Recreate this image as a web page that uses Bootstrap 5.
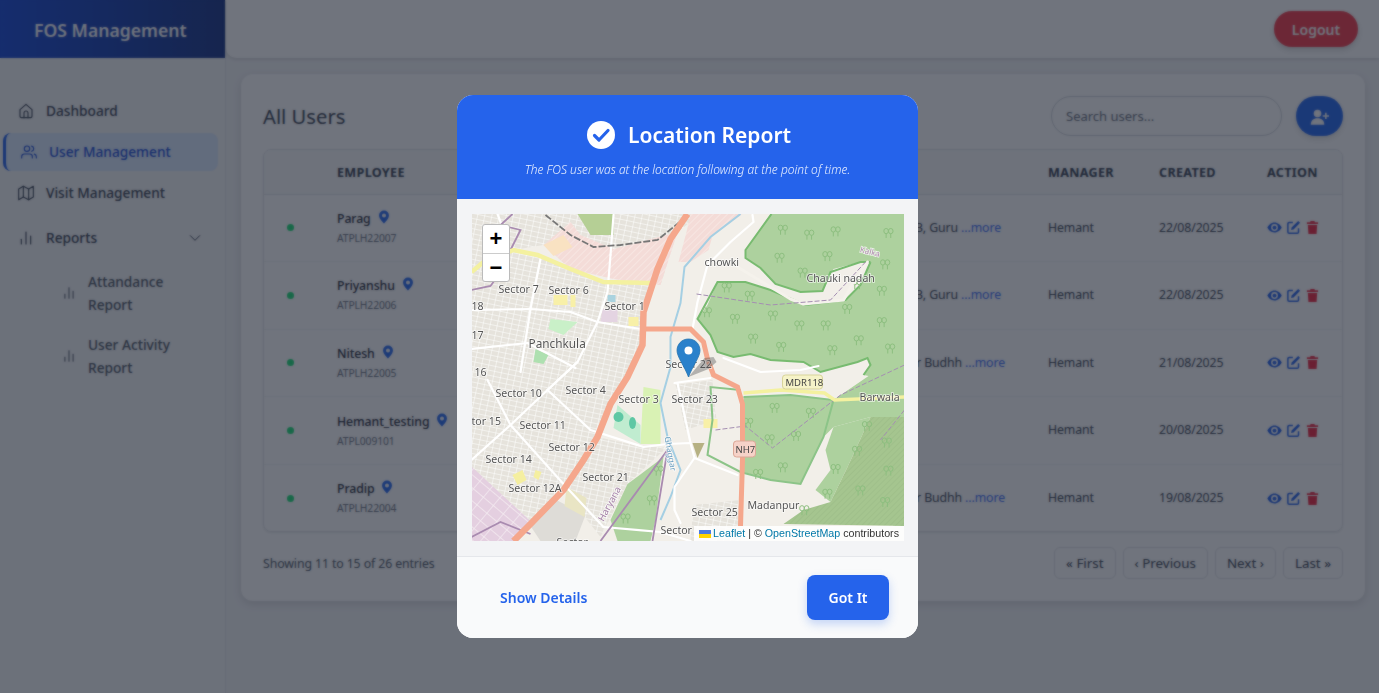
<!DOCTYPE html>
<html lang="en">
<head>
    <meta charset="UTF-8">
    <title>FOS Management</title>
    <link href="https://cdn.jsdelivr.net/npm/bootstrap@5.3.3/dist/css/bootstrap.min.css" rel="stylesheet">
    <style>
        body {
            font-family: "Noto Sans", "Open Sans", sans-serif;
            background-color: #f3f4f6;
            color: #1f2937;
            height: 693px;
            overflow: hidden;
        }

        .side-panel { width: 226px; height: 693px; background-color: #f6f7f8; border-right: 1px solid #e5e7eb; flex-shrink: 0; }
        .brand-box { height: 58px; background: linear-gradient(90deg, #1d4ed8, #1e3a8a); color: #fff; font-size: 17.6px; font-weight: 600; padding: 2px 0 0 34px; }
        .side-menu { padding-top: 34px; }
        .side-link { display: flex; align-items: center; color: #374151; text-decoration: none; font-size: 13.7px; font-weight: 500; height: 38px; padding-left: 18px; margin-right: 7px; margin-bottom: 3px; gap: 12px; }
        .side-link svg { width: 16px; height: 16px; fill: none; stroke: currentColor; stroke-width: 1.7; stroke-linecap: round; stroke-linejoin: round; flex-shrink: 0; }
        .side-link.is-active { color: #1d4ed8; background-color: #dbeafe; border-left: 3px solid #2563eb; border-radius: 8px; margin-left: 3px; padding-left: 15px; }
        .side-link.reports { margin-top: 7px; padding-right: 16px; }
        .side-link.reports .drop { margin-left: auto; width: 14px; height: 14px; }
        .sub-link { display: flex; align-items: center; color: #4b5563; font-size: 13.7px; font-weight: 500; line-height: 23px; padding-left: 62px; gap: 12px; height: 46px; margin-bottom: 17px; }
        .sub-link svg { width: 14px; height: 14px; fill: none; stroke: currentColor; stroke-width: 1.7; stroke-linecap: round; flex-shrink: 0; }
        .sub-link:first-of-type { margin-top: 13px; }

        .main-side { flex-grow: 1; min-width: 0; }
        .top-strip { height: 58px; background-color: #fff; border-bottom-left-radius: 10px; box-shadow: 0 1px 4px rgba(0, 0, 0, .15); padding-right: 21px; }
        .logout-btn { width: 84px; height: 36px; background-color: #f43f4e; color: #fff; border: 0; border-radius: 18px; font-size: 14px; font-weight: 600; box-shadow: 0 3px 6px rgba(0, 0, 0, .15); }
        .users-card { width: 1124px; height: 527px; margin: 16px 0 0 15px; background-color: #fff; border-radius: 12px; box-shadow: 0 3px 10px rgba(0, 0, 0, .12); padding: 22px; }
        .page-title { font-size: 20.2px; font-weight: 400; color: #374151; margin: 0; }
        .tool-row { gap: 14px; }
        .search-box { width: 231px; height: 40px; border-radius: 20px; border: 1px solid #d1d5db; font-size: 13px; padding-left: 14px; background: transparent; }
        .search-box::placeholder { color: #6b7280; }
        .add-btn { width: 47px; height: 40px; border-radius: 20px; background-color: #2a6bf0; border: 0; box-shadow: 0 3px 6px rgba(0, 0, 0, .12); }
        .add-btn svg { width: 19px; height: 19px; fill: #fff; }

        .table-box { width: 1080px; height: 383px; margin-top: 13px; border: 1px solid #e5e7eb; border-radius: 8px; overflow: hidden; box-shadow: 0 1px 2px rgba(0, 0, 0, .08); }
        .user-table { table-layout: fixed; margin: 0; font-size: 12.3px; letter-spacing: -.1px; }
        .user-table th { height: 44px; background-color: #f9fafb; font-size: 12.6px; font-weight: 700; letter-spacing: .3px; color: #374151; vertical-align: middle; padding: 3px 16px 0; border-color: #e5e7eb; }
        .user-table td { height: 67.6px; vertical-align: middle; padding: 0 16px; color: #374151; border-color: #f3f4f6; }
        .user-table tr:last-child td { border-bottom: 0; }
        .state-dot { display: block; width: 7px; height: 7px; margin-left: 7px; border-radius: 50%; background-color: #22e07a; }
        .emp-name { font-weight: 500; color: #1f2937; line-height: 18px; white-space: nowrap; padding-top: 1px; }
        .emp-name svg { width: 14px; height: 14px; fill: #2a6bf0; margin-left: 6px; vertical-align: -1px; }
        .emp-code { font-size: 10.3px; color: #6b7280; line-height: 18px; margin-top: 1px; }
        .addr-cell { text-align: right; padding-right: 31px !important; }
        .addr-cell.longer { padding-right: 27px !important; }
        .more-link { color: #3b6cf6; text-decoration: none; }
        .act-icons { display: flex; gap: 4px; align-items: center; }
        .act-icons svg { width: 15px; height: 15px; }
        .ico-blue { fill: #2563eb; }
        .ico-red { fill: #ef2c44; }

        .foot-line { margin-top: 15px; font-size: 12.3px; letter-spacing: -.1px; color: #4b5563; }
        .foot-count { padding-top: 2px; }
        .pg-row { gap: 7px; }
        .pg-btn { height: 32px; padding: 0 11px; font-size: 13.4px; letter-spacing: 0; color: #374151; background: transparent; border: 1px solid #e5e7eb; border-radius: 6px; line-height: 31px; }

        .modal-backdrop.show { background-color: #111827; opacity: .6; backdrop-filter: blur(1px); }
        .modal-backdrop { background-color: #111827; }
        .report-dialog { width: 461px; max-width: 461px; margin: 95px 0 0 457px; }
        .report-content { border: 0; border-radius: 16px; overflow: hidden; height: 543px; }
        .report-head { height: 104px; background-color: #2563eb; color: #fff; padding-top: 25px; }
        .report-title { font-size: 21px; font-weight: 600; margin: 0; gap: 13px; line-height: 30px; padding-left: 3px; }
        .report-title svg { width: 28px; height: 28px; }
        .report-sub { font-size: 12px; font-style: italic; font-weight: 300; margin: 11px 0 0; line-height: 17px; color: #e8efff; }
        .report-body { height: 357px; background-color: #f3f4f6; padding: 15px 14.5px; }
        .map-box { position: relative; width: 432.5px; height: 327px; overflow: hidden; background-color: #f2efe9; }
        .map-box svg.map-art { display: block; width: 432.5px; height: 327px; filter: blur(.5px); }
        .map-art text { font-family: "Noto Sans", sans-serif; font-size: 10.6px; fill: #555; stroke: #fff; stroke-opacity: .7; stroke-width: 1.6px; paint-order: stroke; }
        .map-zoom { position: absolute; left: 10.5px; top: 10px; width: 28px; border: 1px solid #bbb; border-radius: 3px; background-color: #fff; }
        .map-zoom span { display: block; height: 28px; line-height: 27px; text-align: center; font-size: 22px; font-weight: 700; font-family: "Liberation Sans", sans-serif; color: #000; }
        .map-zoom span + span { border-top: 1px solid #ccc; }
        .map-credit { position: absolute; right: 0; bottom: 0; height: 15px; line-height: 15px; padding: 0 5px; font-family: "Liberation Sans", Arial, sans-serif; font-size: 10.7px; color: #333; background-color: rgba(255, 255, 255, .85); white-space: nowrap; }
        .map-credit a { color: #0078a8; text-decoration: none; }
        .map-credit svg { width: 12px; height: 8px; vertical-align: -.5px; margin-right: 2px; }
        .report-foot { height: 82px; background-color: #f9fafb; border-top: 1px solid #e5e7eb; padding: 0 29px 0 43px; }
        .detail-link { color: #2563eb; font-size: 14px; font-weight: 600; text-decoration: none; }
        .got-btn { width: 82px; height: 45px; background-color: #2563eb; color: #fff; border: 0; border-radius: 8px; font-size: 14px; font-weight: 600; box-shadow: 0 4px 10px rgba(37, 99, 235, .25); }
    </style>
</head>
<body>

<div class="d-flex">
    <aside class="side-panel">
        <div class="brand-box d-flex align-items-center">FOS Management</div>
        <nav class="side-menu">
            <a class="side-link" href="#">
                <svg viewBox="0 0 24 24"><path d="M3 10l9-8 9 8v10a2 2 0 0 1-2 2H5a2 2 0 0 1-2-2z"/><path d="M9 22v-7a3 3 0 0 1 6 0v7"/></svg>
                Dashboard
            </a>
            <a class="side-link is-active" href="#">
                <svg viewBox="0 0 24 24"><path d="M17 21v-2a4 4 0 0 0-4-4H5a4 4 0 0 0-4 4v2"/><circle cx="9" cy="7" r="4"/><path d="M23 21v-2a4 4 0 0 0-3-3.87"/><path d="M16 3.13a4 4 0 0 1 0 7.75"/></svg>
                User Management
            </a>
            <a class="side-link" href="#">
                <svg viewBox="0 0 24 24"><path d="M1 6v16l7-4 8 4 7-4V2l-7 4-8-4z"/><path d="M8 2v16"/><path d="M16 6v16"/></svg>
                Visit Management
            </a>
            <a class="side-link reports" href="#">
                <svg viewBox="0 0 24 24"><path d="M5 21v-7"/><path d="M12 21V3"/><path d="M19 21V9"/></svg>
                Reports
                <svg class="drop" viewBox="0 0 24 24"><path d="M4 8l8 8 8-8"/></svg>
            </a>
            <div class="sub-link">
                <svg viewBox="0 0 24 24"><path d="M5 21v-7"/><path d="M12 21V3"/><path d="M19 21V9"/></svg>
                <span>Attandance<br>Report</span>
            </div>
            <div class="sub-link">
                <svg viewBox="0 0 24 24"><path d="M5 21v-7"/><path d="M12 21V3"/><path d="M19 21V9"/></svg>
                <span>User Activity<br>Report</span>
            </div>
        </nav>
    </aside>

    <div class="main-side">
        <header class="top-strip d-flex align-items-center justify-content-end">
            <button class="logout-btn" type="button">Logout</button>
        </header>

        <main class="users-card">
            <div class="d-flex align-items-center justify-content-between">
                <h1 class="page-title">All Users</h1>
                <div class="d-flex tool-row">
                    <input class="search-box" type="text" placeholder="Search users...">
                    <button class="add-btn" type="button" aria-label="Add user">
                        <svg viewBox="0 0 24 24"><circle cx="9.5" cy="7" r="4.8"/><path d="M1 21c0-5 3-8 8.500-8s8.500 3 8.500 8z"/><path d="M19 6v3h-3v2h3v3h2v-3h3V9h-3V6z"/></svg>
                    </button>
                </div>
            </div>

            <div class="table-box">
                <table class="table user-table">
                    <colgroup>
                        <col style="width: 57px">
                        <col style="width: 149px">
                        <col style="width: 562px">
                        <col style="width: 111px">
                        <col style="width: 108px">
                        <col style="width: 93px">
                    </colgroup>
                    <thead>
                        <tr><th></th><th>EMPLOYEE</th><th></th><th>MANAGER</th><th>CREATED</th><th>ACTION</th></tr>
                    </thead>
                    <tbody id="userRows"></tbody>
                </table>
            </div>

            <div class="foot-line d-flex align-items-center justify-content-between">
                <span class="foot-count">Showing 11 to 15 of 26 entries</span>
                <div class="d-flex pg-row">
                    <span class="pg-btn">« First</span>
                    <span class="pg-btn">‹ Previous</span>
                    <span class="pg-btn">Next ›</span>
                    <span class="pg-btn">Last »</span>
                </div>
            </div>
        </main>
    </div>
</div>

<div class="modal-backdrop show"></div>

<div class="modal d-block" tabindex="-1">
    <div class="modal-dialog report-dialog">
        <div class="modal-content report-content">
            <div class="report-head text-center">
                <h2 class="report-title d-flex align-items-center justify-content-center">
                    <svg viewBox="0 0 28 28"><circle cx="14" cy="14" r="14" fill="#fff"/><path d="M7.500 14.500l4.500 4.500 9-9.500" fill="none" stroke="#2563eb" stroke-width="3.200" stroke-linecap="round" stroke-linejoin="round"/></svg>
                    Location Report
                </h2>
                <p class="report-sub">The FOS user was at the location following at the point of time.</p>
            </div>

            <div class="report-body">
                <div class="map-box">
                    <svg class="map-art" viewBox="471.5 214 432.5 327" xmlns="http://www.w3.org/2000/svg">
                        <defs>
                            <pattern id="blocks" width="7" height="5" patternUnits="userSpaceOnUse" patternTransform="rotate(12)">
                                <rect width="7" height="5" fill="#e6e3dc"/>
                                <path d="M0 0H7M0 0V5" stroke="#fff" stroke-width="1"/>
                            </pattern>
                            <pattern id="lilac" width="13" height="10" patternUnits="userSpaceOnUse" patternTransform="rotate(40)">
                                <rect width="13" height="10" fill="#e4cfe0"/>
                                <path d="M0 0H13M0 0V10" stroke="#f4ecf1" stroke-width="1.400"/>
                            </pattern>
                            <pattern id="pinkHatch" width="5" height="5" patternUnits="userSpaceOnUse" patternTransform="rotate(-45)">
                                <rect width="5" height="5" fill="#f4dcd8"/>
                                <path d="M0 0H5" stroke="#f9eae6" stroke-width="1.500"/>
                            </pattern>
                            <pattern id="greenHatch" width="4" height="4" patternUnits="userSpaceOnUse" patternTransform="rotate(-45)">
                                <rect width="4" height="4" fill="#a5c58f"/>
                                <path d="M0 0H4" stroke="#9aba86" stroke-width="1"/>
                            </pattern>
                            <symbol id="tree" viewBox="0 0 36 36" width="36" height="36">
                                <g fill="none" stroke="#8dbe80" stroke-width="3">
                                    <ellipse cx="11" cy="11" rx="7" ry="8"/><ellipse cx="25" cy="11" rx="7" ry="8"/>
                                    <path d="M11 19v13M25 19v13"/>
                                </g>
                            </symbol>
                        </defs>

                        <rect x="471.500" y="214" width="432.500" height="327" fill="#f2efe9"/>

                        <!-- land use -->
                        <path d="M471.500 214H690V222L677 232 660 285 613 279 570 269 543 245 513 250 471.500 272z" fill="url(#blocks)"/>
                        <path d="M543 245L570 222 580 235 613 249 677 232 660 285 613 279 570 269z" fill="url(#pinkHatch)"/>
                        <path d="M690 214H742L712 236 708 250 690 262 678 262 686 232z" fill="url(#pinkHatch)"/>
                        <path d="M543 245L563 235 572 247 553 256z" fill="#f9e2c2"/>
                        <path d="M577 214H613V235H590z" fill="#b5cf95"/>

                        <!-- built up blocks -->
                        <path d="M471.500 272L513 250 540 255 570 269 603 282 650 283 643 312 640 345 627 377 597 437 563 490 530 524 471.500 470z" fill="url(#blocks)"/>
                        <path d="M597 437L643 447 667 447 627 484 600 537 563 490z" fill="url(#blocks)"/>
                        <path d="M471.500 467L533 524 518 541H471.500z" fill="url(#lilac)"/>
                        <path d="M552 498L585 515 575 541 540 541 530 526z" fill="#dedcd7"/>
                        <path d="M566 487L586 498 584 517 564 506z" fill="#e9e5c4"/>
                        <path d="M675 385L712 380 716 420 685 430z" fill="url(#blocks)"/>
                        <path d="M693 505L740 500 740 541 690 541z" fill="url(#blocks)"/>
                        <path d="M602 309L617 309 617 322 600 322z" fill="#e4d4e2"/>
                        <rect x="607" y="295" width="8" height="7" fill="#aad3df"/>
                        <rect x="553" y="295" width="14" height="10" fill="#f8f0a8"/>
                        <rect x="570" y="295" width="5" height="12" fill="#f8f0a8"/>
                        <rect x="628" y="317" width="10" height="9" fill="#f8f0a8"/>
                        <rect x="703" y="419" width="14" height="9" fill="#f8f0a8"/>
                        <path d="M550 319L577 322 563 335 548 329z" fill="#c9f0c8"/>
                        <path d="M535 349L548 355 543 364 533 362z" fill="#aee0b0"/>
                        <path d="M643 387L660 390 660 444 640 444z" fill="#d9f2b4"/>
                        <path d="M617 405L640 425 640 444 613 428z" fill="#c0ecd0"/>
                        <ellipse cx="618" cy="417" rx="5" ry="5" fill="#5fc7a4"/>
                        <ellipse cx="632" cy="423" rx="3.500" ry="6" fill="#5fc7a4"/>
                        <path d="M692 443H704L697 458z" fill="#b6b183"/>
                        <path d="M512 475L522 470 526 480 517 485zM535 470L541 472 538 480 533 477z" fill="#f5efa0"/>

                        <!-- forest -->
                        <path d="M770 214H904V417L870 417 833 427 823 437 800 484 770 480 743 472V397L790 395 833 400 868 376 863 375 870 365 867 358 857 362 820 372 803 362 770 360 750 354 733 357 717 352 710 335 697 319 707 305 717 282 745 282 770 290 805 305 845 300 860 285 870 262 860 262 833 269 822 291 800 292 775 284 760 268 745 258 745 250z" fill="#add19e"/>
                        <path d="M771 214L745 250V258L760 268 775 284 800 292 822 291 830 272 860 262 870 262M870 262L860 285 845 300 805 305 770 290 745 282H717L697 319 710 335 717 352 733 357 750 354 770 360 803 362 820 372 857 362 867 358 870 365 863 375" fill="none" stroke="#78bb70" stroke-width="2"/>
                        <path d="M743 397L790 395 833 400 823 437 800 484 770 480 740 472 707 455 712 420 710 387 740 390" fill="none" stroke="#8cc488" stroke-width="2"/>
                        <path d="M833 427L870 417 847 467 830 502 815 490 830 470 825 450z" fill="#add19e"/>
                        <path d="M783 524L803 510 830 502 847 467 870 417H904V526z" fill="url(#greenHatch)"/>
                        <path d="M663 457L627 484 610 520 617 541H650L655 520z" fill="#add19e"/>
                        <path d="M833 400L870 376 904 372V392L868 391z" fill="#add19e"/>
                        <path d="M745 373L704 355 722 357 760 362 803 366 818 376 782 385 745 392z" fill="#f2efe9"/>

                        <!-- trees, in 3x crop coordinates -->
                        <g transform="translate(684 206) scale(.33)">
                            <use href="#tree" x="280" y="55"/><use href="#tree" x="360" y="70"/><use href="#tree" x="440" y="60"/><use href="#tree" x="600" y="65"/>
                            <use href="#tree" x="270" y="140"/><use href="#tree" x="415" y="135"/><use href="#tree" x="340" y="185"/><use href="#tree" x="590" y="160"/>
                            <use href="#tree" x="110" y="230"/><use href="#tree" x="180" y="255"/><use href="#tree" x="580" y="240"/><use href="#tree" x="505" y="220"/>
                            <use href="#tree" x="475" y="295"/><use href="#tree" x="50" y="305"/><use href="#tree" x="135" y="325"/><use href="#tree" x="250" y="315"/>
                            <use href="#tree" x="330" y="345"/><use href="#tree" x="410" y="345"/><use href="#tree" x="580" y="335"/><use href="#tree" x="190" y="385"/>
                            <use href="#tree" x="275" y="410"/><use href="#tree" x="430" y="420"/><use href="#tree" x="510" y="390"/><use href="#tree" x="605" y="415"/>
                        </g>
                        <g transform="translate(684 371) scale(.33)">
                            <use href="#tree" x="255" y="95"/><use href="#tree" x="365" y="110"/><use href="#tree" x="175" y="140"/><use href="#tree" x="240" y="190"/>
                            <use href="#tree" x="320" y="180"/><use href="#tree" x="280" y="275"/><use href="#tree" x="205" y="295"/><use href="#tree" x="440" y="280"/>
                            <use href="#tree" x="415" y="355"/><use href="#tree" x="345" y="405"/><use href="#tree" x="535" y="150"/><use href="#tree" x="595" y="200"/>
                            <use href="#tree" x="505" y="225"/><use href="#tree" x="600" y="285"/><use href="#tree" x="515" y="345"/><use href="#tree" x="590" y="380"/>
                        </g>
                        <g transform="translate(464 371) scale(.33)">
                            <use href="#tree" x="470" y="430"/><use href="#tree" x="550" y="375"/><use href="#tree" x="570" y="285"/>
                        </g>

                        <!-- water -->
                        <path d="M740 214L710 237 684 267 680 303 670 337V367L660 403 667 437 680 470 670 497 660 520" fill="none" stroke="#a5cfe3" stroke-width="2"/>

                        <!-- streets -->
                        <g fill="none" stroke="#fff" stroke-width="2.200" stroke-linecap="round" stroke-linejoin="round">
                            <path d="M540 259L530 309 520 372"/>
                            <path d="M471 310L530 309 570 312 597 322 640 329"/>
                            <path d="M610 255L607 292 597 322 577 362 547 390"/>
                            <path d="M471 349L527 343 575 368"/>
                            <path d="M547 390L590 430 643 447 667 444 690 443 694 458 737 475"/>
                            <path d="M487 380L510 425 563 484 603 527"/>
                            <path d="M471 460L510 425 547 390 577 362"/>
                            <path d="M694 458L674 487V510L680 523"/>
                            <path d="M674 383L710 378M677 383L690 443"/>
                            <path d="M752 215L753 222 730 242 707 265 697 302 692 329"/>
                            <path d="M613 215L610 255M603 527L660 532 690 541M497 214L505 235 498 250"/>
                            <path d="M723 358L760 372 800 370 818 366"/>
                            <path d="M737 267L790 299 803 304 843 300 853 282 867 262" stroke="#f5f2ec" stroke-width="3"/>
                        </g>

                        <!-- boundaries and rails -->
                        <g fill="none" stroke="#a98bb0" stroke-width="1.800">
                            <path d="M667 450L600 541M667 450L652 541"/>
                            <path d="M471 537L500 522 530 534"/>
                            <path d="M471 290L490 286 498 275M510 250L520 230 500 225 512 214"/>
                        </g>
                        <g fill="none" stroke="#a58fb2" stroke-width="1" stroke-dasharray="5 2">
                            <path d="M696 294L770 305 830 300 865 262M715 430L745 426 772 448 840 395 904 365M904 410L880 440"/>
                        </g>
                        <path d="M545 215L570 235 593 247 620 245 657 240 683 219" fill="none" stroke="#777" stroke-width="1.800" stroke-dasharray="7 2"/>

                        <!-- main roads -->
                        <path d="M471 272L483 262 513 250 537 255 570 269 603 282 650 283" fill="none" stroke="#f4f1a0" stroke-width="4.500"/>
                        <path d="M743 393L780 390 824 393 834 400 904 397" fill="none" stroke="#f4f1a0" stroke-width="3.400"/>
                        <path d="M642 329H690L703 342 707 359 713 375 737 387 742 404V460L740 526" fill="none" stroke="#f5a78c" stroke-width="5"/>
                        <path d="M687 214L670 239 657 269 643 312 642 345 627 377 610 404 597 437 583 460 563 490 530 524 513 541" fill="none" stroke="#f5a78c" stroke-width="6.500"/>

                        <!-- labels -->
                        <text x="498" y="293">Sector 7</text>
                        <text x="548" y="294">Sector 6</text>
                        <text x="604" y="310">Sector 1</text>
                        <text x="471" y="310">18</text>
                        <text x="471" y="339">17</text>
                        <text x="474" y="376">16</text>
                        <text x="528" y="348" style="font-size: 11.800px">Panchkula</text>
                        <text x="704" y="266">chowki</text>
                        <text x="806" y="282">Chauki nadah</text>
                        <text x="665" y="368">Sector 22</text>
                        <text x="495" y="397">Sector 10</text>
                        <text x="565" y="394">Sector 4</text>
                        <text x="618" y="403">Sector 3</text>
                        <text x="671" y="403">Sector 23</text>
                        <text x="471" y="425">tor 15</text>
                        <text x="519" y="429">Sector 11</text>
                        <text x="548" y="451">Sector 12</text>
                        <text x="485" y="463">Sector 14</text>
                        <text x="582" y="481">Sector 21</text>
                        <text x="508" y="492">Sector 12A</text>
                        <text x="691" y="516">Sector 25</text>
                        <text x="660" y="534">Sector</text>
                        <text x="556" y="546">Sector</text>
                        <text x="747" y="509">Madanpur</text>
                        <text x="859" y="401">Barwala</text>
                        <text transform="translate(859 252) rotate(14)" style="font-size: 8px; fill: #b08ab0">Kalka</text>
                        <text transform="translate(664 437) rotate(80)" style="font-size: 8.500px; fill: #6a9fc0">Ghaggar</text>
                        <text transform="translate(603 522) rotate(-62)" style="font-size: 9.500px; fill: #a583a8">Haryana</text>

                        <rect x="782" y="375" width="40" height="14" rx="3" fill="#f6f3c8" stroke="#d8d49a"/>
                        <text x="785" y="385.500" style="font-size: 9.500px; fill: #444; stroke: none">MDR118</text>
                        <rect x="733" y="441" width="22" height="16" rx="3" fill="#f6d2c8" stroke="#dca897"/>
                        <text x="735" y="452.500" style="font-size: 9.500px; fill: #444; stroke: none">NH7</text>

                        <!-- marker -->
                        <path d="M688 377L704 358 713 357 716 362 708 369z" fill="#555" opacity=".4"/>
                        <path d="M688 339C681 339 676.500 344.500 676.500 350.500C676.500 357 684 366 688 377C692 366 699.500 357 699.500 350.500C699.500 344.500 695 339 688 339z" fill="#2a81cb" stroke="#2474b0" stroke-width=".8"/>
                        <circle cx="688" cy="350.500" r="4" fill="#fff"/>
                    </svg>

                    <div class="map-zoom"><span>+</span><span>−</span></div>
                    <div class="map-credit">
                        <svg viewBox="0 0 12 8"><rect width="12" height="4" fill="#4C7BE1"/><rect y="4" width="12" height="4" fill="#FFD500"/></svg><a href="#">Leaflet</a> | © <a href="#">OpenStreetMap</a> contributors
                    </div>
                </div>
            </div>

            <div class="report-foot d-flex align-items-center justify-content-between">
                <a class="detail-link" href="#">Show Details</a>
                <button class="got-btn" type="button">Got It</button>
            </div>
        </div>
    </div>
</div>

<script src="https://cdn.jsdelivr.net/npm/bootstrap@5.3.3/dist/js/bootstrap.bundle.min.js"></script>
<script>
    const users = [
        { name: "Parag", code: "ATPLH22007", addr: "Sector 23, Guru", wide: false, date: "22/08/2025" },
        { name: "Priyanshu", code: "ATPLH22006", addr: "Sector 23, Guru", wide: false, date: "22/08/2025" },
        { name: "Nitesh", code: "ATPLH22005", addr: "Sector Budhh", wide: true, date: "21/08/2025" },
        { name: "Hemant_testing", code: "ATPL009101", addr: "", wide: false, date: "20/08/2025" },
        { name: "Pradip", code: "ATPLH22004", addr: "Sector Budhh", wide: true, date: "19/08/2025" }
    ];

    const pinIcon = '<svg viewBox="0 0 24 24"><path fill-rule="evenodd" d="M12 1a8.500 8.500 0 0 0-8.500 8.500C3.500 15.500 12 23 12 23s8.500-7.500 8.500-13.500A8.500 8.500 0 0 0 12 1zm0 5a3.500 3.500 0 1 1 0 7 3.500 3.500 0 0 1 0-7z"/></svg>';
    const actionIcons = `<div class="act-icons">
        <svg class="ico-blue" viewBox="0 0 24 24"><path fill-rule="evenodd" d="M12 4C6.500 4 2.500 8 .5 12c2 4 6 8 11.500 8s9.500-4 11.500-8C21.500 8 17.500 4 12 4zm0 2.500a5.500 5.500 0 1 1 0 11 5.500 5.500 0 0 1 0-11z"/><circle cx="12" cy="12" r="3"/></svg>
        <svg class="ico-blue" viewBox="0 0 24 24"><path d="M11 4H5a2 2 0 0 0-2 2v13a2 2 0 0 0 2 2h13a2 2 0 0 0 2-2v-6" fill="none" stroke="#2563eb" stroke-width="2.400"/><path d="M19.500 1.500l3 3L12 15l-4 1 1-4z"/></svg>
        <svg class="ico-red" viewBox="0 0 24 24"><path d="M9 1.500h6l1 2h5V6.500H3V3.500h5zM4.500 8h15l-1 14.500h-13z"/></svg>
    </div>`;

    document.getElementById("userRows").innerHTML = users.map(user => `
        <tr>
            <td><span class="state-dot"></span></td>
            <td><div class="emp-name">${user.name}${pinIcon}</div><div class="emp-code">${user.code}</div></td>
            <td class="addr-cell ${user.wide ? "longer" : ""}">${user.addr ? user.addr + ' <a class="more-link" href="#">...more</a>' : ""}</td>
            <td>Hemant</td>
            <td>${user.date}</td>
            <td>${actionIcons}</td>
        </tr>`).join("");
</script>
</body>
</html>
